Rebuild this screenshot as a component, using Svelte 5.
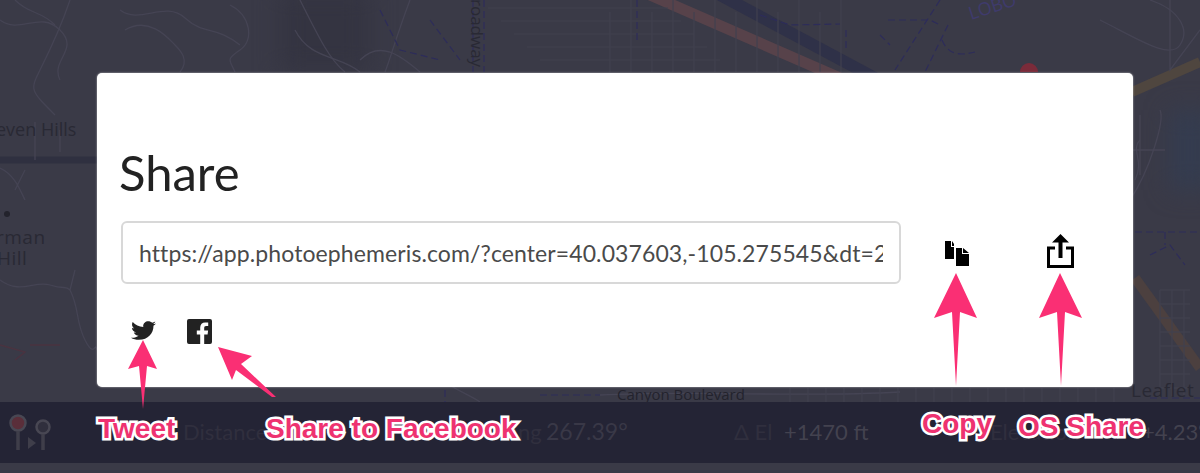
<script>
  const url = "https://app.photoephemeris.com/?center=40.037603,-105.275545&dt=20190610";

  // thin street lines of the dimmed map
  const streets = [
    "M0 20 C20 35 40 10 60 30 S50 60 60 80",
    "M15 0 C30 15 40 10 55 25",
    "M70 0 C60 30 50 50 40 70 S30 90 55 115",
    "M120 10 C140 25 165 0 185 18 S215 25 240 45",
    "M125 30 C150 15 170 40 175 45 S190 60 180 72",
    "M230 5 C250 15 255 40 240 50 S230 60 235 72",
    "M300 0 C320 40 330 60 345 72",
    "M295 30 C310 60 340 55 360 72",
    "M410 0 C395 40 390 60 385 72",
    "M360 60 C380 40 400 55 420 72",
    "M0 168 C15 175 20 190 25 200 M25 170 L15 190",
    "M35 122 V160 M60 130 V152",
    "M0 280 C20 295 35 280 50 285 S65 285 70 290 L75 270 M70 290 C80 310 75 320 85 340 S95 340 97 350",
    "M1130 200 C1150 170 1165 120 1160 110 M1130 150 H1165 M1140 115 V175",
    "M1150 0 C1180 10 1190 30 1180 45 S1140 40 1100 20",
    "M1170 0 V70 L1200 30",
    "M1135 180 C1145 160 1130 150 1140 140",
    "M430 372 C450 388 470 395 480 402",
    "M600 395 C700 390 800 398 900 392"
  ];
  const blocks = [];
  for (let x = 610; x < 860; x += 21) blocks.push(`M${x} ${x % 2 ? 0 : 12} V72`);
  for (let y = 8; y < 72; y += 13) blocks.push(`M${480 + y} ${y} H${660 + y}`);
  for (let y = 290; y < 400; y += 14) blocks.push(`M1160 ${y} H1190`);
  for (let x = 1160; x < 1195; x += 12) blocks.push(`M${x} 290 V396`);
  for (let x = 790; x < 1125; x += 18) blocks.push(`M${x} 388 V402`);

  const trails = [
    "M380 10 L400 50 L440 60 M430 20 L460 60",
    "M473 0 V72 M484 0 V72",
    "M637 0 V40",
    "M760 15 L790 25 L840 24 M846 30 V50 M880 35 L890 45",
    "M888 20 H930 L940 25 M948 25 L925 72 M940 0 L895 70",
    "M942 40 C948 55 960 56 975 52",
    "M1135 232 H1200 M1165 232 V245 M1150 255 L1170 245 L1185 265",
    "M1150 398 H1200",
    "M445 390 V402 M540 395 H600"
  ];
</script>

<div class="page">
  <svg class="map" viewBox="0 0 1200 473" aria-hidden="true">
    <rect width="1200" height="473" fill="#3a3a47" />
    <g class="soft">
      <rect x="280" y="-10" width="90" height="82" fill="#343441" />
      <rect x="1170" y="110" width="40" height="80" fill="#343c50" />
    </g>
    <path d="M0 160 H97" stroke="#2f3040" stroke-width="7" />
    <path d="M650 -5 L840 78" stroke="#57424a" stroke-width="11" />
    <path d="M720 -5 L875 78" stroke="#2f3148" stroke-width="12" />
    <path d="M1132 92 L1200 62" stroke="#4f463f" stroke-width="10" />
    <path d="M1135 278 L1200 368" stroke="#4c403f" stroke-width="10" />
    <path d="M1020 72 a9 9 0 0 1 18 0 z" fill="#7a2b3a" />
    <path d="M0 345 L25 352 L15 360 M30 345 H60" fill="none" stroke="#4a3340" stroke-width="1.4" />
    {#each streets as d}
      <path {d} fill="none" stroke="#454454" stroke-width="1.3" />
    {/each}
    {#each blocks as d}
      <path {d} fill="none" stroke="#41414f" stroke-width="1.2" />
    {/each}
    {#each trails as d}
      <path {d} fill="none" stroke="#2d2c5a" stroke-width="1.2" stroke-dasharray="7 4" />
    {/each}
    <circle cx="7" cy="214" r="3" fill="#23232c" />
    <g class="maplabels">
      <text x="-4" y="136" class="hills">even Hills</text>
      <text x="-4" y="244" class="big">rman</text>
      <text x="-3" y="265" class="big">Hill</text>
      <text x="0" y="0" transform="translate(471 -12) rotate(90)" font-size="14">Broadway</text>
      <text x="0" y="0" transform="translate(971 20) rotate(-18)" class="lobo">LOBO</text>
      <text x="617" y="400" class="canyon">Canyon Boulevard</text>
      <text x="1131" y="397" class="big">Leaflet | </text>
    </g>
  </svg>

  <section class="modal">
    <h1>Share</h1>
    <div class="linkrow">
      <input type="text" value={url} readonly />
      <button class="copy" aria-label="Copy">
        <svg width="25" height="26" viewBox="0 0 25 26">
          <path d="M0 0H6V6H9V18H0Z M7 0L9 3V5H7Z" fill="#000" />
          <path d="M11 7H17V13H24V25H11Z M18 7L24 12H18Z" fill="#000" />
        </svg>
      </button>
      <button class="osshare" aria-label="OS Share">
        <svg width="27" height="34" viewBox="0 0 27 34">
          <path d="M13.5 0L22 8.5H15.5V24H11.5V8.5H5Z" fill="#000" />
          <path d="M8 14H1.5V32.5H25.5V14H19" fill="none" stroke="#000" stroke-width="3" />
        </svg>
      </button>
    </div>
    <div class="social">
      <svg width="25" height="23" viewBox="0 0 512 512" preserveAspectRatio="none" fill="#222">
        <path d="M459.37 151.716c.325 4.548.325 9.097.325 13.645 0 138.72-105.583 298.558-298.558 298.558-59.452 0-114.68-17.219-161.137-47.106 8.447.974 16.568 1.299 25.34 1.299 49.055 0 94.213-16.568 130.274-44.832-46.132-.975-84.792-31.188-98.112-72.772 6.498.974 12.995 1.624 19.818 1.624 9.421 0 18.843-1.3 27.614-3.573-48.081-9.747-84.143-51.98-84.143-102.985v-1.299c13.969 7.797 30.214 12.67 47.431 13.319-28.264-18.843-46.781-51.005-46.781-87.391 0-19.492 5.197-37.36 14.294-52.954 51.655 63.675 129.3 105.258 216.365 109.807-1.624-7.797-2.599-15.918-2.599-24.04 0-57.828 46.782-104.934 104.934-104.934 30.213 0 57.502 12.67 76.67 33.137 23.715-4.548 46.456-13.32 66.599-25.34-7.798 24.366-24.366 44.833-46.132 57.827 21.117-2.273 41.584-8.122 60.426-16.243-14.292 20.791-32.161 39.308-52.628 54.253z" />
      </svg>
      <svg width="25" height="25" viewBox="0 0 25 25">
        <path fill="#222" d="M2 0H23A2 2 0 0 1 25 2V23A2 2 0 0 1 23 25H17.2V15.4H20.6L21.1 11.5H17.2V9C17.2 7.9 17.6 7.1 19.2 7.1H21.2V3.6C20.8 3.5 19.6 3.4 18.2 3.4C15.2 3.4 13.2 5.2 13.2 8.5V11.5H9.8V15.4H13.2V25H2A2 2 0 0 1 0 23V2A2 2 0 0 1 2 0Z" />
      </svg>
    </div>
  </section>

  <footer class="bar">
    <svg class="pins" width="45" height="38" viewBox="0 0 45 38">
      <circle cx="9" cy="9" r="7.5" fill="#5a2e3a" stroke="#484753" stroke-width="2.5" />
      <path d="M9 17V36" stroke="#3f3e4a" stroke-width="3.5" />
      <path d="M19 23L27 29L19 35Z" fill="#3f3e4a" />
      <circle cx="34" cy="13" r="6.5" fill="#302f3d" stroke="#484753" stroke-width="2.5" />
      <path d="M34 20V36" stroke="#3f3e4a" stroke-width="3.5" />
    </svg>
    <span class="stat s1">Distance</span>
    <span class="stat s2">Bearing</span>
    <span class="stat s3">267.39°</span>
    <span class="stat s4">Δ El</span>
    <span class="stat s5">+1470 ft</span>
    <span class="stat s6">Elevation</span>
    <span class="stat s7">+4.23°</span>
  </footer>
  <div class="strip">
    <i class="grey first"></i><i class="tan"></i><i class="grey mid"></i><i class="dark"></i><i class="grey rest"></i>
  </div>

  <!-- annotations pasted on top of the screenshot -->
  <svg class="arrows" viewBox="0 0 1200 473" aria-hidden="true">
    <g fill="#fa2f74">
      <polygon points="143,340 157,369 147,366 143,409 139,366 128,369" />
      <polygon points="218,347 252,356 241,364 276,397 272,397 236,370 232,380" />
      <polygon points="956,273 977,318 960,312 956,386 952,312 934,318" />
      <polygon points="1060,273 1082,318 1065,312 1061,386 1057,312 1039,318" />
    </g>
  </svg>
  <span class="note n1">Tweet</span>
  <span class="note n2">Share to Facebook</span>
  <span class="note n3">Copy</span>
  <span class="note n4">OS Share</span>
</div>

<style>
  :global(body) {
    margin: 0;
  }
  .page {
    position: relative;
    width: 1200px;
    height: 473px;
    overflow: hidden;
    padding-top: 73px;
    box-sizing: border-box;
    font-family: Lato, "Open Sans", sans-serif;
  }
  .map {
    position: absolute;
    inset: 0;
    width: 1200px;
    height: 473px;
  }
  .soft {
    filter: blur(12px);
  }
  .maplabels text {
    font-family: "Open Sans", sans-serif;
    font-size: 17px;
    fill: #292934;
  }
  .maplabels .hills {
    font-size: 18px;
  }
  .maplabels .big {
    font-size: 19px;
    letter-spacing: 0.5px;
  }
  .maplabels .canyon {
    font-size: 15px;
    fill: #23232d;
  }
  .maplabels .lobo {
    fill: #3f3a6c;
    font-size: 18px;
  }
  .modal {
    position: relative;
    box-sizing: border-box;
    width: 1036px;
    height: 314px;
    margin-left: 97px;
    padding: 72px 24px 0;
    background: #fff;
    border-radius: 5px;
    box-shadow: 0 0 2px rgba(255, 255, 255, 0.7);
  }
  h1 {
    margin: 0 0 0 -2px;
    height: 76px;
    font-size: 49px;
    line-height: 54px;
    font-weight: 400;
    color: #222;
  }
  .linkrow {
    display: flex;
    align-items: center;
  }
  input {
    box-sizing: border-box;
    width: 780px;
    height: 63px;
    padding: 0 16px;
    border: 2px solid #d8d8d8;
    border-radius: 6px;
    font-family: Lato, sans-serif;
    font-size: 23px;
    letter-spacing: 0.1px;
    color: #4a4a4a;
    outline: none;
  }
  button {
    padding: 0;
    border: 0;
    background: none;
    display: flex;
  }
  .copy {
    margin-left: 44px;
    margin-top: 2px;
  }
  .osshare {
    margin-left: 77px;
    margin-top: -3px;
  }
  .social {
    display: flex;
    align-items: flex-start;
    gap: 31px;
    margin: 35px 0 0 10px;
  }
  .bar {
    position: relative;
    box-sizing: border-box;
    height: 61px;
    margin-top: 15px;
    background: #242435;
    color: #393847;
    font-size: 22px;
  }
  .pins {
    position: absolute;
    left: 9px;
    top: 12px;
  }
  .stat {
    position: absolute;
    top: 16px;
    white-space: nowrap;
  }
  .s1 { left: 183px; color: #302f3e; }
  .s2 { left: 468px; width: 70px; text-align: right; color: #302f3e; }
  .s3 { left: 546px; font-size: 23px; top: 15px; }
  .s4 { left: 734px; color: #302f3e; }
  .s5 { left: 784px; color: #43424f; }
  .s6 { left: 990px; color: #302f3e; }
  .s7 { left: 1142px; color: #43424f; }
  .strip {
    display: flex;
    height: 10px;
  }
  .strip i {
    display: block;
    height: 10px;
  }
  .strip .grey { background: #3c3b48; }
  .strip .first { width: 230px; }
  .strip .tan { width: 168px; background: #423a3e; }
  .strip .mid { width: 515px; }
  .strip .dark { width: 170px; background: #25263c; }
  .strip .rest { width: 117px; }
  .arrows {
    position: absolute;
    inset: 0;
    width: 1200px;
    height: 473px;
    pointer-events: none;
  }
  .note {
    position: absolute;
    font-family: "Liberation Sans", Arial, sans-serif;
    font-weight: 700;
    font-size: 28px;
    line-height: 30px;
    color: #ee3270;
    white-space: nowrap;
    -webkit-text-stroke: 5px #fff;
    paint-order: stroke fill;
  }
  .n1 { left: 98px; top: 414px; }
  .n2 { left: 266px; top: 414px; }
  .n3 { left: 922px; top: 409px; }
  .n4 { left: 1018px; top: 412px; }
</style>
